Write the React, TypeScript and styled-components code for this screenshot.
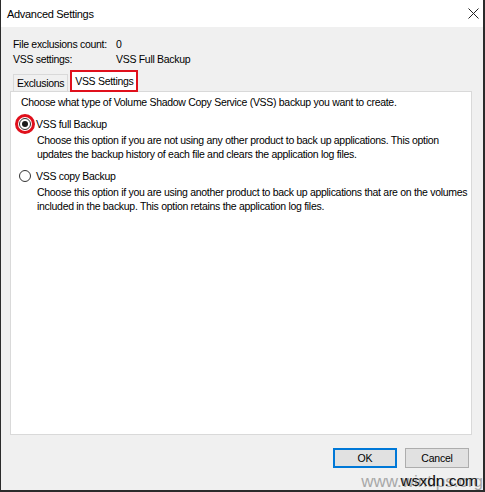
import React from "react";
import styled, { createGlobalStyle } from "styled-components";

const Global = createGlobalStyle`
  html, body { margin: 0; padding: 0; background: #ffffff; }
  body { font-family: "Liberation Sans", Arial, sans-serif; font-size: 10.5px; letter-spacing: -0.3px; color: #000; }
`;

const Window = styled.div`
  position: relative;
  width: 485px;
  height: 492px;
  box-sizing: border-box;
  border-left: 1px solid #2b2b2b;
  border-right: 2px solid #2b2b2b;
  border-bottom: 2px solid #2b2b2b;
  display: flex;
  flex-direction: column;
  background: #f0f0f0;
  overflow: hidden;
  white-space: nowrap;
`;

const TitleBar = styled.div`
  height: 27px;
  flex: none;
  background: #ffffff;
  display: flex;
  align-items: center;
  justify-content: space-between;
  padding: 0 4px 0 6px;
`;

const Title = styled.span`
  font-size: 11px;
  letter-spacing: -0.3px;
  color: #000;
`;

const Body = styled.div`
  flex: 1;
  display: flex;
  flex-direction: column;
  padding: 10px 11px 0 9px;
`;

const InfoRow = styled.div`
  display: grid;
  grid-template-columns: 103px 1fr;
  height: 14px;
  line-height: 14px;
  padding-left: 3px;
  margin-bottom: 1px;
`;

const Tabs = styled.div`
  display: flex;
  align-items: flex-end;
  height: 22px;
  margin-top: 3px;
  margin-bottom: -1px;
  padding-left: 3px;
  position: relative;
  z-index: 2;
`;

const Tab = styled.div<{ $active?: boolean }>`
  box-sizing: border-box;
  height: ${p => (p.$active ? "22px" : "17px")};
  padding: 0 3px;
  display: flex;
  align-items: center;
  justify-content: center;
  background: ${p => (p.$active ? "#ffffff" : "#f0f0f0")};
  border: ${p => (p.$active ? "2px solid #e0101c" : "1px solid #d9d9d9")};
  border-bottom: ${p => (p.$active ? "2px solid #e0101c" : "none")};
  margin-right: ${p => (p.$active ? "0" : "2px")};
  margin-bottom: ${p => (p.$active ? "0" : "1px")};
`;

const Panel = styled.div`
  height: 344px;
  flex: none;
  background: #ffffff;
  border: 1px solid #d9d9d9;
  padding: 3px 8px 0 8px;
  box-sizing: border-box;
`;

const Intro = styled.div`
  height: 14px;
  line-height: 14px;
  padding-left: 2px;
  margin-bottom: 7px;
`;

const Option = styled.div`
  display: flex;
  flex-direction: column;
  margin-bottom: 7px;
`;

const OptionHead = styled.div`
  display: flex;
  align-items: center;
  height: 16px;
  line-height: 16px;
  gap: 5px;
  position: relative;
`;

const Radio = styled.span<{ $checked?: boolean }>`
  box-sizing: border-box;
  width: 12px;
  height: 12px;
  border-radius: 50%;
  border: 1px solid #333;
  background: #fff;
  display: inline-flex;
  align-items: center;
  justify-content: center;
  &::after {
    content: "";
    width: 6px;
    height: 6px;
    border-radius: 50%;
    background: ${p => (p.$checked ? "#1a1a1a" : "transparent")};
  }
`;

const Highlight = styled.span`
  position: absolute;
  left: -4px;
  top: -2px;
  width: 20px;
  height: 20px;
  box-sizing: border-box;
  border-radius: 50%;
  border: 3px solid #e0101c;
`;

const Desc = styled.div`
  padding-left: 18px;
  line-height: 14px;
  margin-top: 1px;
`;

const Footer = styled.div`
  display: flex;
  justify-content: flex-end;
  gap: 8px;
  padding: 13px 3px 0 0;
`;

const Button = styled.button<{ $default?: boolean }>`
  box-sizing: border-box;
  width: 64px;
  height: 20px;
  font-family: "Liberation Sans", Arial, sans-serif;
  font-size: 10.5px;
  letter-spacing: -0.2px;
  color: #000;
  background: #e1e1e1;
  border: ${p => (p.$default ? "2px solid #0078d7" : "1px solid #adadad")};
  padding: 0;
`;

const Watermark = styled.div`
  position: absolute;
  right: 0;
  bottom: -2px;
  font-size: 17px;
  line-height: 20px;
  color: #a8a8a8;
  letter-spacing: 0;
  font-family: "Liberation Sans", Arial, sans-serif;
`;

const WatermarkOver = styled.div`
  position: absolute;
  right: 5px;
  bottom: 0;
  font-size: 15.5px;
  line-height: 18px;
  letter-spacing: 0;
  color: #111;
  font-family: "Liberation Sans", Arial, sans-serif;
`;

const CloseIcon = () => (
  <svg width="11" height="11" viewBox="0 0 11 11">
    <path d="M0.5 0.5 L10.5 10.5 M10.5 0.5 L0.5 10.5" stroke="#222" strokeWidth="1" fill="none" />
  </svg>
);

export default function App() {
  return (
    <>
      <Global />
      <Window>
        <TitleBar>
          <Title>Advanced Settings</Title>
          <CloseIcon />
        </TitleBar>
        <Body>
          <InfoRow>
            <span>File exclusions count:</span>
            <span>0</span>
          </InfoRow>
          <InfoRow>
            <span>VSS settings:</span>
            <span>VSS Full Backup</span>
          </InfoRow>
          <Tabs>
            <Tab>Exclusions</Tab>
            <Tab $active>VSS Settings</Tab>
          </Tabs>
          <Panel>
            <Intro>Choose what type of Volume Shadow Copy Service (VSS) backup you want to create.</Intro>
            <Option>
              <OptionHead>
                <Highlight />
                <Radio $checked />
                <span>VSS full Backup</span>
              </OptionHead>
              <Desc>
                Choose this option if you are not using any other product to back up applications. This option
                <br />
                updates the backup history of each file and clears the application log files.
              </Desc>
            </Option>
            <Option>
              <OptionHead>
                <Radio />
                <span>VSS copy Backup</span>
              </OptionHead>
              <Desc>
                Choose this option if you are using another product to back up applications that are on the volumes
                <br />
                included in the backup. This option retains the application log files.
              </Desc>
            </Option>
          </Panel>
          <Footer>
            <Button $default>OK</Button>
            <Button>Cancel</Button>
          </Footer>
        </Body>
        <Watermark>www.wintips.org</Watermark>
        <WatermarkOver>wsxdn.com</WatermarkOver>
      </Window>
    </>
  );
}
